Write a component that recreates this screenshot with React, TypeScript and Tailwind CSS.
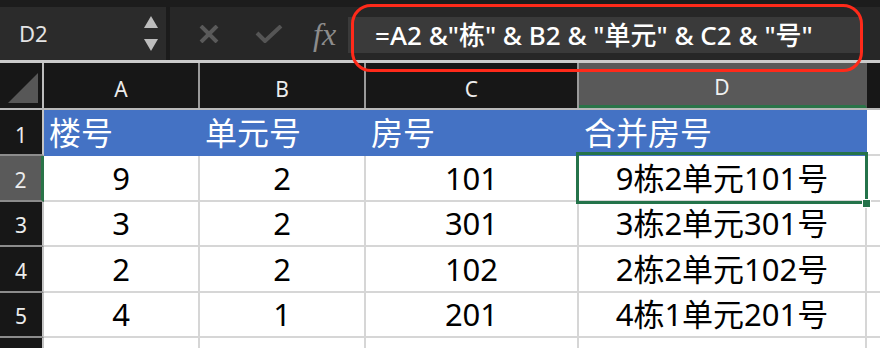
const cols = [
  { key: "A", w: "w-[156px]" },
  { key: "B", w: "w-[166px]" },
  { key: "C", w: "w-[213px]" },
  { key: "D", w: "w-[288px]" },
];

const rows = [
  { n: 2, a: "9", b: "2", c: "101", d: "9栋2单元101号", h: "h-[46px]" },
  { n: 3, a: "3", b: "2", c: "301", d: "3栋2单元301号", h: "h-[45px]" },
  { n: 4, a: "2", b: "2", c: "102", d: "2栋2单元102号", h: "h-[46px]" },
  { n: 5, a: "4", b: "1", c: "201", d: "4栋1单元201号", h: "h-[45px]" },
];

const cjk = "font-['Noto_Sans','Noto_Sans_CJK_SC',sans-serif]";

function Toolbar() {
  return (
    <div className="h-[63px] bg-[#1c1c1c] pt-[7px] border-b-[3px] border-[#cbcbcb]">
      <div className="h-[53px] flex bg-[#272727]">
        <div className="w-[166px] flex items-center justify-between pl-[19px] pr-[8px] bg-[#2b2b2b]">
          <span className={`text-[22px] text-[#e4e4e4] ${cjk}`}>D2</span>
          <div className="flex flex-col gap-[11px] items-center">
            <svg width="14" height="12" viewBox="0 0 14 12">
              <polygon points="7,0 14,12 0,12" fill="#bdbdbd" />
            </svg>
            <svg width="14" height="12" viewBox="0 0 14 12">
              <polygon points="0,0 14,0 7,12" fill="#bdbdbd" />
            </svg>
          </div>
        </div>
        <div className="w-[4px] bg-[#1b1b1b]" />
        <div className="flex items-center">
          <svg width="20" height="18" viewBox="0 0 20 18" className="ml-[29px]">
            <path d="M2 1 L18 17 M18 1 L2 17" stroke="#5a5a5a" strokeWidth="4" />
          </svg>
          <svg width="28" height="18" viewBox="0 0 28 18" className="ml-[36px]">
            <path d="M2 8 L10 16 L26 1" stroke="#555555" strokeWidth="4" fill="none" />
          </svg>
          <span className="ml-[30px] text-[32px] italic text-[#8c8c8c] font-['Liberation_Serif',serif] leading-none">
            fx
          </span>
        </div>
        <div className="ml-[12px] mt-[10px] h-[36px] w-[514px] bg-[#3a3a3a] flex items-center pl-[27px]">
          <span className={`text-[26px] font-medium text-white whitespace-pre ${cjk}`}>
            =A2 &amp;"栋" &amp; B2 &amp; "单元" &amp; C2 &amp; "号"
          </span>
        </div>
      </div>
    </div>
  );
}

export default function App() {
  return (
    <div className={`relative w-[880px] h-[348px] overflow-hidden bg-white ${cjk}`}>
      <Toolbar />

      {/* column headers */}
      <div className="flex h-[47px] bg-[#171717] border-b-2 border-[#b9b9b9]">
        <div className="w-[44px] border-r-2 border-[#bdbdbd] flex items-end pl-[8px] pb-[5px]">
          <svg width="30" height="30" viewBox="0 0 30 30">
            <polygon points="30,0 30,30 0,30" fill="#575757" />
          </svg>
        </div>
        {cols.map((c) => (
          <div
            key={c.key}
            className={`${c.w} border-r-2 flex items-center justify-center pt-[8px] text-[21px] ${
              c.key === "D"
                ? "bg-[#595959] border-[#595959] border-b-[3px] border-b-[#2a7448] text-[#f0f0f0]"
                : "border-[#9a9a9a] text-[#ececec]"
            }`}
          >
            {c.key}
          </div>
        ))}
        <div className="flex-1" />
      </div>

      {/* row 1 */}
      <div className="flex h-[46px]">
        <div className="w-[44px] bg-[#171717] border-r-2 border-b-2 border-r-[#c4c4c4] border-b-[#8c8c8c] flex items-end justify-center pb-[3px] text-[21px] text-[#ececec]">
          1
        </div>
        <div className="flex bg-[#4472c4] text-white text-[32px] leading-none">
          {["楼号", "单元号", "房号", "合并房号"].map((t, i) => (
            <div key={t} className={`${cols[i].w} flex items-center pl-[5px]`}>
              {t}
            </div>
          ))}
        </div>
        <div className="flex-1 border-b-2 border-[#d6d6d6]" />
      </div>

      {rows.map((r) => (
        <div key={r.n} className={`flex ${r.h}`}>
          <div
            className={`w-[44px] border-b-2 border-b-[#8c8c8c] flex items-end justify-center pb-[4px] text-[21px] text-[#ececec] ${
              r.n === 2
                ? "bg-[#5a5a5a] border-r-[3px] border-r-[#2a7448]"
                : "bg-[#171717] border-r-2 border-r-[#c4c4c4]"
            }`}
          >
            {r.n}
          </div>
          <div className="flex text-[31px] text-black leading-none">
            {[r.a, r.b, r.c, r.d].map((v, i) => (
              <div
                key={i}
                className={`${cols[i].w} border-r-2 border-b-2 border-[#d6d6d6] flex items-center justify-center`}
              >
                {v}
              </div>
            ))}
          </div>
          <div className="flex-1 border-b-2 border-[#d6d6d6]" />
        </div>
      ))}

      <div className="flex h-[20px]">
        <div className="w-[44px] bg-[#171717] border-r-2 border-[#c4c4c4]" />
        {cols.map((c) => (
          <div key={c.key} className={`${c.w} border-r-2 border-[#d6d6d6]`} />
        ))}
      </div>

      {/* selected cell D2 */}
      <div className="absolute left-[576px] top-[152px] w-[292px] h-[52px] border-[3px] border-[#24734a]" />
      <div className="absolute left-[862px] top-[199px] w-[9px] h-[9px] bg-[#24734a] border border-white" />

      {/* red annotation */}
      <div className="absolute left-[351px] top-[4px] w-[512px] h-[68px] rounded-[20px] border-[3.5px] border-[#ff2a1a]" />
    </div>
  );
}
